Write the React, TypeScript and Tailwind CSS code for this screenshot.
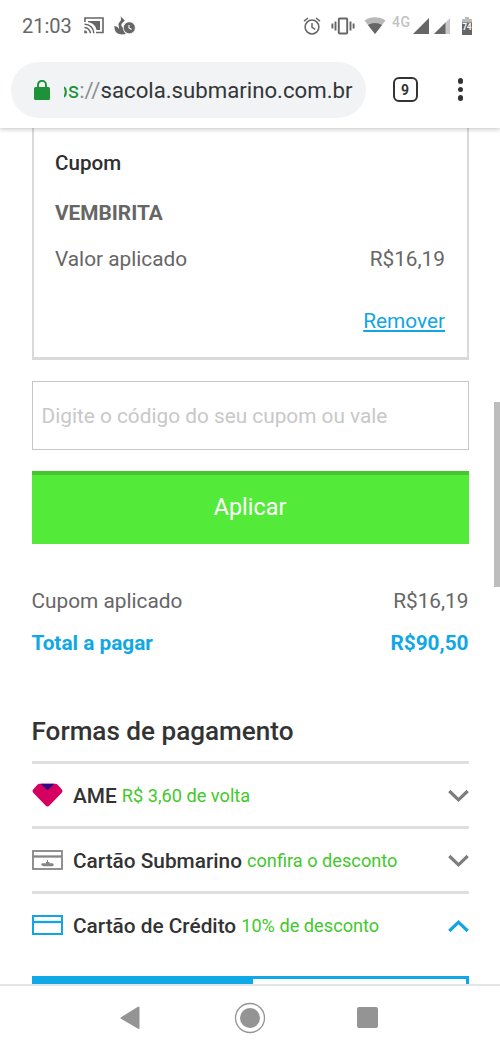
import type { ReactNode } from "react"

function StatusBar() {
  return (
    <div className="flex h-[51px] items-center pl-[22px] pr-[27px] text-[#666]">
      <span className="w-[62px] text-[20px] leading-none">21:03</span>

      {/* Cast */}
      <svg className="h-[17px] w-[20px]" viewBox="0 0 20 17" fill="none">
        <path d="M1 5V1H19V15.500H12" stroke="currentColor" strokeWidth="1.600" />
        <path d="M4 4H16V13H12.500C12 9 8.500 5.500 4 5.300Z" fill="currentColor" />
        <path d="M.5 7.200A9 9 0 0 1 9.800 16.300M.5 10.500A6 6 0 0 1 6.400 16.300" stroke="currentColor" strokeWidth="1.500" />
        <path d="M.3 13.200A3.200 3.200 0 0 1 3.300 16.300H.3Z" fill="currentColor" />
      </svg>

      {/* Flame with clock */}
      <svg className="ml-[10px] h-[19px] w-[22px]" viewBox="0 0 22 19">
        <path d="M6.500 .2L10.800 4.600C9.500 6.300 7.300 7.300 7.300 9.300C7.300 11 9.300 11.300 9.500 13C9.500 15 10.500 17 12 17.800C6.500 19.500 1.500 17.500 .8 13.500Q.5 11.500 .2 10.300C2.500 9.800 4.200 11 4.500 12.800C5.800 11.500 4.300 9.800 4.400 8.300C4.500 6.300 7 5.500 7 3.500C7 2.300 6.800 1.200 6.500 .2Z" fill="currentColor" />
        <circle cx="15.300" cy="11.800" r="6" fill="currentColor" stroke="#fff" strokeWidth=".7" />
        <path d="M15 9V12L17.600 13.500" stroke="#fff" strokeWidth="1.100" fill="none" />
      </svg>

      <div className="ml-auto flex items-center">
        {/* Alarm */}
        <svg className="h-[18px] w-[18px]" viewBox="0 0 18 18" fill="none" stroke="currentColor" strokeWidth="1.500">
          <circle cx="9" cy="10" r="6.900" />
          <path d="M1 4.200L5 1M17 4.200L13 1M9 6V10.400L12.200 12.300" />
        </svg>

        {/* Vibrate */}
        <svg className="ml-[10px] h-[18px] w-[24px]" viewBox="0 0 24 18" fill="none" stroke="currentColor" strokeWidth="1.900">
          <rect x="7.800" y="1.500" width="8.400" height="15" rx=".8" />
          <path d="M1.400 6.500V11.500M4.500 4.500V13.500M19.500 4.500V13.500M22.600 6.500V11.500" />
        </svg>

        {/* Wi-Fi */}
        <svg className="ml-[9px] h-[17px] w-[22px]" viewBox="0 0 22 17">
          <path d="M11 17L.5 3.500C6.500-.8 15.500-.8 21.500 3.500Z" fill="#b8b8b8" />
          <path d="M11 17L4 8C8 5.200 14 5.200 18 8Z" fill="currentColor" />
        </svg>

        <span className="mb-[7px] ml-[6px] w-[21px] text-[14px] font-medium leading-none tracking-[0.6px] text-[#c2c2c2]">4G</span>

        <svg className="h-[16px] w-[16px]" viewBox="0 0 16 16">
          <path d="M0 16L16 0V16Z" fill="currentColor" />
        </svg>
        <svg className="ml-[5px] h-[16px] w-[16px]" viewBox="0 0 16 16">
          <path d="M0 16L16 0V16Z" fill="#c8c8c8" />
          <path d="M0 16L11.500 4.500V16Z" fill="currentColor" />
        </svg>

        {/* Battery */}
        <svg className="ml-[11px] h-[18px] w-[12px]" viewBox="0 0 12 18">
          <path d="M4 0H8V2H11V6H1V2H4Z" fill="#bbb" />
          <path d="M1 5.500H11V18H1Z" fill="currentColor" />
          <text x="6" y="12.500" textAnchor="middle" fontSize="9" fontWeight="700" fill="#fff" textLength="9" lengthAdjust="spacingAndGlyphs">74</text>
        </svg>
      </div>
    </div>
  )
}

function AddressBar() {
  return (
    <div className="flex h-[77px] items-center pl-[11px]">
      <div className="flex h-[56px] w-[355px] items-center rounded-full bg-[#f1f3f4] pl-[23px]">
        <svg className="h-[20px] w-[16px]" viewBox="0 0 16 20">
          <path d="M4 8V4.800A4 4 0 0 1 12 4.800V8" fill="none" stroke="#1e9239" strokeWidth="1.900" />
          <rect width="16" height="13" y="7" rx="1.500" fill="#1e9239" />
        </svg>
        <div className="ml-[14px] flex w-[288.5px] justify-end overflow-hidden whitespace-nowrap text-[22.2px] leading-[28px]">
          <span className="text-[#1e9239]">ps</span>
          <span className="text-[#8c8f92]">://</span>
          <span className="text-[#333639]">sacola.submarino.com.br</span>
        </div>
      </div>
      <div className="ml-[26.5px] flex h-[25px] w-[25px] items-center justify-center rounded-[6px] border-2 border-[#333] text-[14px] font-bold leading-none text-[#333]">
        9
      </div>
      <div className="ml-[40px] flex flex-col gap-[3px]">
        <span className="h-[5.5px] w-[5.5px] rounded-full bg-[#333]" />
        <span className="h-[5.5px] w-[5.5px] rounded-full bg-[#333]" />
        <span className="h-[5.5px] w-[5.5px] rounded-full bg-[#333]" />
      </div>
    </div>
  )
}

function Chevron({ up = false }: { up?: boolean }) {
  return (
    <svg className="ml-auto h-[14px] w-[21px]" viewBox="0 0 21 14" fill="none" strokeWidth="3.200">
      {up ? <path d="M1.300 12L10.500 3.200L19.700 12" stroke="#12a5e3" /> : <path d="M1.300 2L10.500 10.800L19.700 2" stroke="#7d7d7d" />}
    </svg>
  )
}

function PaymentRow({ icon, name, note, up }: { icon: ReactNode; name: string; note: string; up?: boolean }) {
  return (
    <div className="flex h-[65px] items-center border-t-[3px] border-[#dfdfdf] pt-[2px]">
      <div className="w-[41.5px]">{icon}</div>
      <span className="pt-[2px] text-[20.8px] font-medium text-[#333]">{name}</span>
      <span className="ml-[5px] text-[18.2px] text-[#43c82b]">{note}</span>
      <Chevron up={up} />
    </div>
  )
}

export default function App() {
  return (
    <div className="flex h-[1051px] w-[500px] flex-col overflow-hidden bg-white font-['Roboto',sans-serif]">
      <header className="relative z-10 h-[128px] shrink-0 bg-white shadow-[0_1px_5px_rgba(0,0,0,0.25)]">
        <StatusBar />
        <AddressBar />
      </header>

      <main className="relative h-[856px] shrink-0 overflow-hidden pl-[31.500px] pr-[31.500px]">
        {/* Cupom aplicado */}
        <section className="h-[231.5px] border-x-2 border-b-[3px] border-[#dadada] px-[21.500px] pt-[20px] text-[20.8px] leading-[30px] text-[#666]">
          <h2 className="text-[20.6px] font-medium text-[#2f2f2f]">Cupom</h2>
          <p className="mt-[20px] font-bold">VEMBIRITA</p>
          <div className="mt-[16px] flex justify-between">
            <span>Valor aplicado</span>
            <span>R$16,19</span>
          </div>
          <div className="mt-[32px] text-right">
            <a className="text-[#12a5e3] underline decoration-2 underline-offset-2">Remover</a>
          </div>
        </section>

        <div className="mt-[21px] flex h-[69.5px] items-center border border-[#c6c6c6] pl-[9px] pt-[2px] text-[20.8px] text-[#c8c8c8]">
          <span>Digite o código do seu cupom ou vale</span>
        </div>

        <button className="mt-[21px] flex h-[73px] w-full items-center justify-center border-t-4 border-[#43c72d] bg-[#54ea39] pb-[3px] text-[23.4px] text-white">
          Aplicar
        </button>

        <div className="mt-[42px] text-[20.8px] leading-[30px] text-[#666]">
          <div className="flex justify-between">
            <span>Cupom aplicado</span>
            <span>R$16,19</span>
          </div>
          <div className="mt-[12px] flex justify-between font-bold text-[#0fa8e4]">
            <span>Total a pagar</span>
            <span>R$90,50</span>
          </div>
        </div>

        {/* Formas de pagamento */}
        <h2 className="mt-[53px] text-[26.1px] font-medium leading-[40px] text-[#333]">Formas de pagamento</h2>
        <div className="mt-[10px]">
          <PaymentRow
            name="AME"
            note="R$ 3,60 de volta"
            icon={
              <svg className="mb-[3px] h-[24px] w-[31px]" viewBox="0 0 32 24" preserveAspectRatio="none">
                <path d="M8 .8H24Q25.500 .8 26.500 1.800L30.800 6.500Q32.200 8.300 30.500 10L18 22.500Q16 24.500 14 22.500L1.500 10Q-.2 8.300 1.200 6.500L5.500 1.800Q6.500 .8 8 .8Z" fill="#d5005f" />
                <path d="M9 .8H23L17.200 6.200Q16 7.200 14.800 6.200Z" fill="#330a80" />
              </svg>
            }
          />
          <PaymentRow
            name="Cartão Submarino"
            note="confira o desconto"
            icon={
              <svg className="mb-[3px] h-[20px] w-[31px]" viewBox="0 0 31 20" fill="none" stroke="#858585">
                <rect x="1" y="1" width="29" height="18" strokeWidth="1.800" />
                <path d="M1 6.500H30" strokeWidth="2.300" />
                <path d="M10.500 13.300H14V12H15V10H16V12H17.500V13.300H20.500Q23 14.500 20.500 16.300H11Q9 15 9 14Z" fill="#858585" stroke="none" />
              </svg>
            }
          />
          <PaymentRow
            name="Cartão de Crédito"
            note="10% de desconto"
            up
            icon={
              <svg className="mb-[3px] h-[20px] w-[31px]" viewBox="0 0 31 20" fill="none" stroke="#12a5e3">
                <rect x="1" y="1" width="29" height="18" strokeWidth="2" />
                <path d="M1 7H30" strokeWidth="2.300" />
              </svg>
            }
          />
          <div className="mt-[20px] flex h-[60px] border-[3px] border-[#0fa9e6]">
            <div className="w-[218px] bg-[#0fa9e6]" />
          </div>
        </div>

        {/* Scrollbar */}
        <div className="absolute right-0 top-[274px] h-[185px] w-[6px] bg-[#bdbdbd]" />
      </main>

      <nav className="flex h-[67px] items-center border-t-2 border-[#e5e5e5] pb-[2px] text-[#949494]">
        <svg className="ml-[120px] h-[24px] w-[20px]" viewBox="0 0 20 24">
          <path d="M18.500 1.500V22L1.500 12Z" fill="currentColor" stroke="currentColor" strokeWidth="2" strokeLinejoin="round" />
        </svg>
        <svg className="ml-[94px] h-[32px] w-[32px]" viewBox="0 0 32 32">
          <circle cx="16" cy="16" r="14.500" fill="none" stroke="currentColor" strokeWidth="1.300" />
          <circle cx="16" cy="16" r="10" fill="currentColor" />
        </svg>
        <div className="ml-[91px] h-[21px] w-[21px] rounded-[2px] bg-[#949494]" />
      </nav>
    </div>
  )
}
